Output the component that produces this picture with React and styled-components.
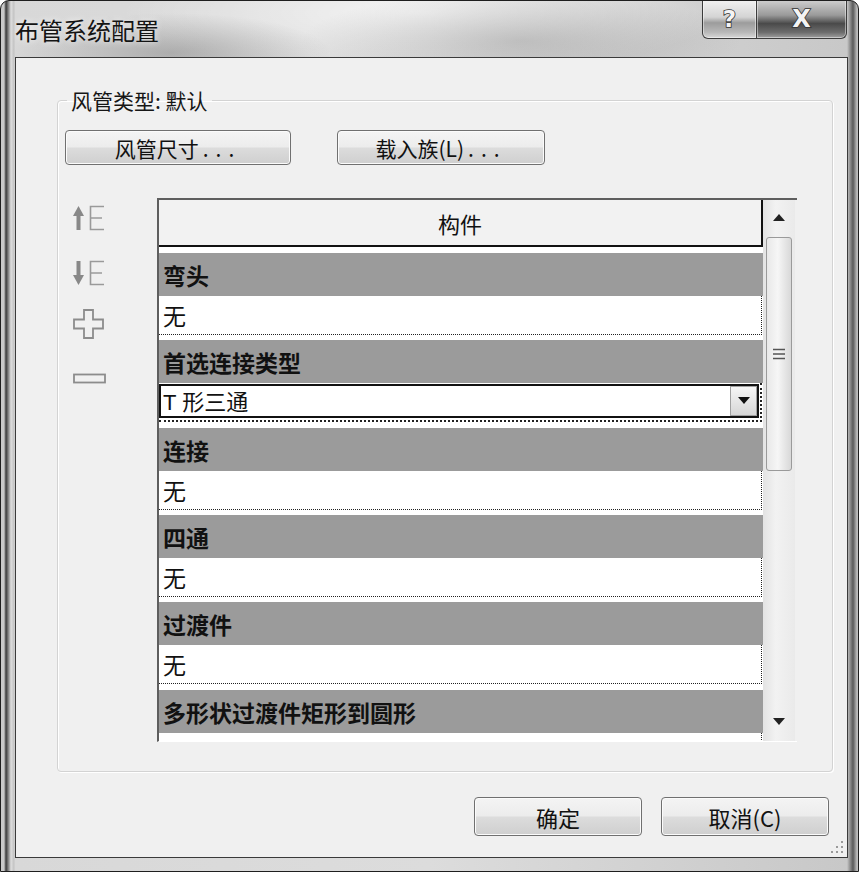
import React from 'react';
import styled, { createGlobalStyle } from 'styled-components';

const GlobalStyle = createGlobalStyle`
  html, body {
    margin: 0;
    padding: 0;
    background: #ffffff;
  }
  body {
    font-family: "Noto Sans CJK SC", "Liberation Sans", sans-serif;
    color: #111;
  }
`;

const Frame = styled.div`
  position: relative;
  width: 859px;
  height: 872px;
  box-sizing: border-box;
  display: flex;
  flex-direction: column;
  border: 1px solid #1e1e1e;
  border-radius: 9px 9px 0 0;
  overflow: hidden;
  background:
    radial-gradient(ellipse 160px 40px at 170px 52px, rgba(90,90,90,0.35), rgba(90,90,90,0) 100%),
    radial-gradient(ellipse 220px 50px at 520px 40px, rgba(80,80,80,0.25), rgba(80,80,80,0) 100%),
    radial-gradient(ellipse 300px 60px at 420px 12px, rgba(255,255,255,0.7), rgba(255,255,255,0) 100%),
    linear-gradient(90deg, #c9c9c9 0, #c9c9c9 3px, #3a3a3a 5px, #9a9a9a 8px, #dedede 10px, #c2c2c2 13px, #d8d8d8 14px, #dcdcdc 50%, #c8c8c8 846px, #5a5a5a 852px, #bdbdbd 856px);
`;

const TitleBar = styled.div`
  height: 56px;
  flex: none;
  display: flex;
  align-items: flex-start;
  padding-left: 14px;
  box-sizing: border-box;
`;

const Title = styled.div`
  margin-top: 14px;
  font-size: 24px;
  line-height: 30px;
  color: #141414;
  text-shadow: 0 0 6px rgba(255,255,255,0.9);
`;

const CaptionGroup = styled.div`
  margin-left: auto;
  margin-right: 11px;
  display: flex;
  margin-top: -1px;
`;

const CaptionButton = styled.div`
  width: ${p => p.$w}px;
  height: 39px;
  box-sizing: border-box;
  border: 1px solid #3c3c3c;
  border-top: none;
  border-left: ${p => (p.$close ? 'none' : '1px solid #3c3c3c')};
  border-radius: ${p => (p.$close ? '0 0 6px 0' : '0 0 0 6px')};
  background: ${p =>
    p.$close
      ? 'linear-gradient(180deg, #d0d0d0 0, #9a9a9a 40%, #4a4a4a 62%, #6c6c6c 85%, #a0a0a0 100%)'
      : 'linear-gradient(180deg, #f2f2f2 0, #d4d4d4 45%, #9c9c9c 60%, #b8b8b8 85%, #d8d8d8 100%)'};
  box-shadow: inset 0 0 0 1px rgba(255,255,255,0.45);
  display: flex;
  align-items: center;
  justify-content: center;
  font-family: "DejaVu Sans", sans-serif;
  font-weight: 700;
  font-size: ${p => (p.$close ? 24 : 23)}px;
  color: #f4f4f4;
  -webkit-text-stroke: 1.6px #333;
  paint-order: stroke fill;
`;

const Client = styled.div`
  position: relative;
  margin-left: 14px;
  width: 833px;
  height: 801px;
  flex: none;
  box-sizing: border-box;
  border: 1px solid #3a3a3a;
  background: #f0f0f0;
  display: flex;
  flex-direction: column;
`;

const GroupBox = styled.fieldset`
  margin: 30px 14px 0 41px;
  height: 684px;
  box-sizing: border-box;
  padding: 0 0 0 7px;
  border: 1px solid #d3d3d3;
  border-radius: 4px;
  box-shadow: 1px 1px 0 #ffffff, inset 1px 1px 0 #ffffff;
  min-width: 0;
`;

const GroupLabel = styled.legend`
  margin-left: 2px;
  padding: 0 4px;
  font-size: 21px;
  line-height: 24px;
  color: #161616;
`;

const ButtonRow = styled.div`
  display: flex;
  gap: 46px;
  margin-top: 18px;
`;

const PushButton = styled.div`
  width: ${p => p.$w}px;
  height: ${p => p.$h || 35}px;
  box-sizing: border-box;
  border: 1px solid #707070;
  border-radius: 4px;
  background: linear-gradient(180deg, #f4f4f4 0, #ececec 48%, #dcdcdc 52%, #cfcfcf 100%);
  box-shadow: inset 0 0 0 1px #fbfbfb;
  display: flex;
  align-items: center;
  justify-content: center;
  font-size: ${p => p.$fs || 21}px;
  color: #111;
  white-space: pre;
`;

const Dots = styled.span`
  letter-spacing: 7px;
  margin-left: 4px;
`;

const Body = styled.div`
  display: flex;
  margin-top: 33px;
`;

const ToolColumn = styled.div`
  width: 92px;
  padding-left: 8px;
  box-sizing: border-box;
  display: flex;
  flex-direction: column;
  align-items: flex-start;
`;

const ToolIcon = styled.svg`
  display: block;
  margin-top: ${p => p.$mt}px;
`;

const Table = styled.div`
  width: 640px;
  height: 544px;
  box-sizing: border-box;
  border-top: 2px solid #5e5e5e;
  border-left: 2px solid #5e5e5e;
  border-bottom: 1px solid #ffffff;
  display: flex;
  overflow: hidden;
`;

const Grid = styled.div`
  width: 604px;
  flex: none;
  background: #ffffff;
  overflow: hidden;
`;

const HeaderCell = styled.div`
  height: 47px;
  box-sizing: border-box;
  background: #f2f2f2;
  border-bottom: 2px solid #111;
  border-right: 2px solid #111;
  display: flex;
  align-items: center;
  justify-content: center;
  font-size: 22px;
`;

const Section = styled.div`
  margin-top: ${p => p.$gap}px;
`;

const CategoryRow = styled.div`
  height: 43px;
  background: #9b9b9b;
  padding-left: 4px;
  display: flex;
  align-items: center;
  font-size: 23px;
  font-weight: 700;
  color: #111;
  white-space: nowrap;
`;

const ValueRow = styled.div`
  height: 39px;
  box-sizing: border-box;
  background: #ffffff;
  border-bottom: 1px dotted #222;
  border-right: 1px dotted #222;
  margin-right: 1px;
  padding-left: 4px;
  display: flex;
  align-items: center;
  font-size: 23px;
  color: #111;
`;

const ComboRow = styled.div`
  height: 39px;
  box-sizing: border-box;
  border-bottom: 2px dotted #222;
  border-right: 2px dotted #222;
  margin-right: 1px;
  padding: 1px 1px 2px 0;
`;

const Combo = styled.div`
  height: 100%;
  box-sizing: border-box;
  border: 2px solid #111;
  background: #fff;
  display: flex;
  align-items: center;
  padding-left: 2px;
  font-size: 22px;
`;

const ComboText = styled.span`
  flex: 1;
  margin-top: -3px;
  font-family: "Liberation Sans", "Noto Sans CJK SC", sans-serif;
`;

const ComboButton = styled.div`
  width: 27px;
  height: 100%;
  box-sizing: border-box;
  border: 1px solid #a0a0a0;
  background: linear-gradient(180deg, #f6f6f6, #d6d6d6);
  display: flex;
  align-items: center;
  justify-content: center;
`;

const ScrollBar = styled.div`
  width: 32px;
  flex: none;
  background: linear-gradient(90deg, #e3e3e3, #f2f2f2 40%, #eaeaea);
  display: flex;
  flex-direction: column;
  align-items: center;
`;

const ScrollArrow = styled.div`
  height: ${p => p.$h}px;
  flex: none;
  display: flex;
  align-items: center;
  justify-content: center;
`;

const Thumb = styled.div`
  width: 26px;
  height: 234px;
  box-sizing: border-box;
  margin-top: 3px;
  border: 1px solid #9a9a9a;
  border-radius: 3px;
  background: linear-gradient(90deg, #e8e8e8, #f6f6f6 45%, #d8d8d8);
  display: flex;
  align-items: center;
  justify-content: center;
`;

const ScrollFill = styled.div`
  flex: 1;
`;

const Footer = styled.div`
  display: flex;
  justify-content: flex-end;
  gap: 19px;
  margin: 25px 18px 0 0;
`;

const SizeGrip = styled.svg`
  position: absolute;
  right: 2px;
  bottom: 2px;
`;

const ArrowUpIcon = ({ down, mt }) => (
  <ToolIcon $mt={mt} width="34" height="28" viewBox="0 0 34 28">
    {down ? (
      <>
        <rect x="3.5" y="2" width="4" height="16" fill="#888" />
        <polygon points="0,16 11,16 5.5,26" fill="#888" />
      </>
    ) : (
      <>
        <polygon points="5.5,2 11,12 0,12" fill="#888" />
        <rect x="3.5" y="10" width="4" height="16" fill="#888" />
      </>
    )}
    <path d="M31 2.5 H17.5 V25.5 H31 M17.5 14 H29" fill="none" stroke="#9a9a9a" strokeWidth="1.6" />
  </ToolIcon>
);

const PlusIcon = ({ mt }) => (
  <ToolIcon $mt={mt} width="32" height="30" viewBox="0 0 32 30">
    <path d="M11 1 H20 V10.5 H30 V19.5 H20 V29 H11 V19.5 H1 V10.5 H11 Z" fill="none" stroke="#8c8c8c" strokeWidth="1.8" />
  </ToolIcon>
);

const MinusIcon = ({ mt }) => (
  <ToolIcon $mt={mt} width="34" height="12" viewBox="0 0 34 12">
    <rect x="1" y="1.5" width="31" height="8" fill="none" stroke="#8c8c8c" strokeWidth="1.8" />
  </ToolIcon>
);

const sections = [
  { name: '弯头', value: '无', gap: 6 },
  { name: '首选连接类型', value: 'T 形三通', combo: true, gap: 5 },
  { name: '连接', value: '无', gap: 6 },
  { name: '四通', value: '无', gap: 5 },
  { name: '过渡件', value: '无', gap: 5 },
  { name: '多形状过渡件矩形到圆形', value: '无', gap: 6 },
];

const App = () => {
  return (
    <>
      <GlobalStyle />
      <Frame>
        <TitleBar>
          <Title>布管系统配置</Title>
          <CaptionGroup>
            <CaptionButton $w={55}>?</CaptionButton>
            <CaptionButton $w={90} $close>X</CaptionButton>
          </CaptionGroup>
        </TitleBar>

        <Client>
          <GroupBox>
            <GroupLabel>风管类型: 默认</GroupLabel>
            <ButtonRow>
              <PushButton $w={226}>风管尺寸<Dots>...</Dots></PushButton>
              <PushButton $w={208}>载入族(L)<Dots>...</Dots></PushButton>
            </ButtonRow>

            <Body>
              <ToolColumn>
                <ArrowUpIcon mt={6} />
                <ArrowUpIcon down mt={27} />
                <PlusIcon mt={22} />
                <MinusIcon mt={34} />
              </ToolColumn>

              <Table>
                <Grid>
                  <HeaderCell>构件</HeaderCell>
                  {sections.map(s => (
                    <Section key={s.name} $gap={s.gap}>
                      <CategoryRow>{s.name}</CategoryRow>
                      {s.combo ? (
                        <ComboRow>
                          <Combo>
                            <ComboText>{s.value}</ComboText>
                            <ComboButton>
                              <svg width="12" height="8" viewBox="0 0 12 8">
                                <polygon points="0,0 12,0 6,7" fill="#111" />
                              </svg>
                            </ComboButton>
                          </Combo>
                        </ComboRow>
                      ) : (
                        <ValueRow>{s.value}</ValueRow>
                      )}
                    </Section>
                  ))}
                </Grid>
                <ScrollBar>
                  <ScrollArrow $h={34}>
                    <svg width="12" height="7" viewBox="0 0 12 7">
                      <polygon points="6,0 12,7 0,7" fill="#222" />
                    </svg>
                  </ScrollArrow>
                  <Thumb>
                    <svg width="14" height="12" viewBox="0 0 14 12">
                      <path d="M1 1.5 H13 M1 6 H13 M1 10.5 H13" stroke="#555" strokeWidth="1.6" />
                    </svg>
                  </Thumb>
                  <ScrollFill />
                  <ScrollArrow $h={40}>
                    <svg width="12" height="7" viewBox="0 0 12 7">
                      <polygon points="0,0 12,0 6,7" fill="#222" />
                    </svg>
                  </ScrollArrow>
                </ScrollBar>
              </Table>
            </Body>
          </GroupBox>

          <Footer>
            <PushButton $w={168} $h={39} $fs={22}>确定</PushButton>
            <PushButton $w={168} $h={39} $fs={22}>取消(C)</PushButton>
          </Footer>

          <SizeGrip width="16" height="16" viewBox="0 0 16 16">
            {[[13, 3], [13, 8], [8, 8], [13, 13], [8, 13], [3, 13]].map(([x, y]) => (
              <rect key={`${x}-${y}`} x={x - 1} y={y - 1} width="2" height="2" fill="#9a9a9a" />
            ))}
          </SizeGrip>
        </Client>
      </Frame>
    </>
  );
};

export default App;
